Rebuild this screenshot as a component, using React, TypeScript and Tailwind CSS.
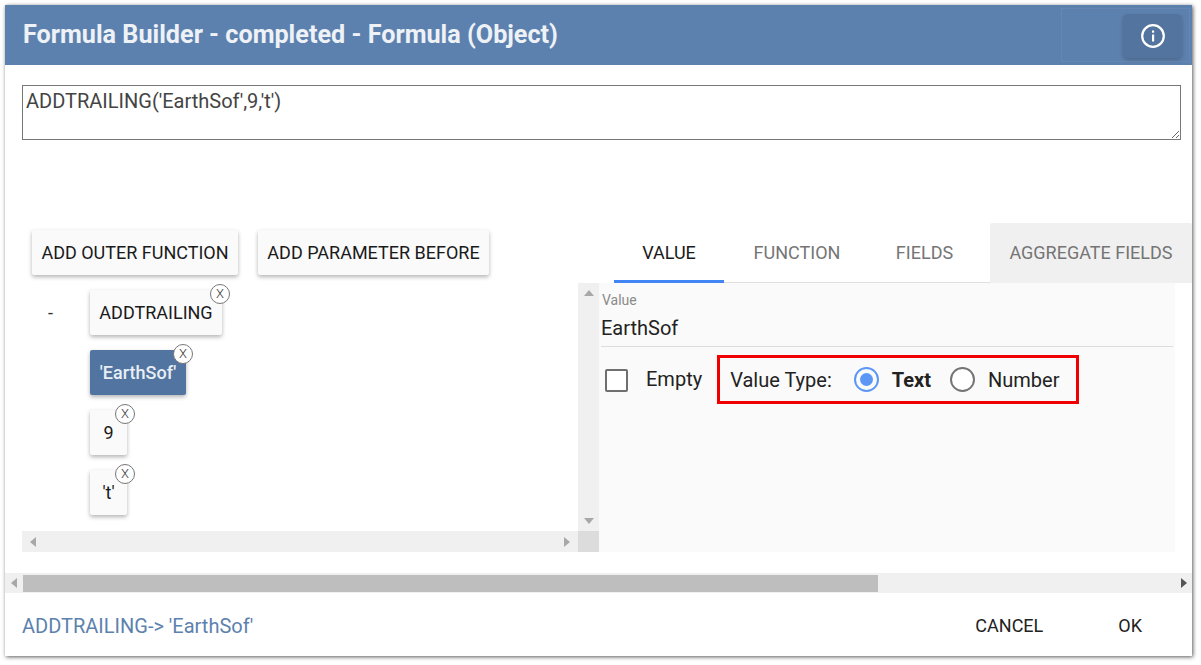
import React from "react";

function Tri({ dir, color = "#a8a8a8" }: { dir: "l" | "r" | "u" | "d"; color?: string }) {
  const p = { l: "6,0 6,10 0,5", r: "0,0 0,10 6,5", u: "0,6 10,6 5,0", d: "0,0 10,0 5,6" }[dir];
  const horiz = dir === "l" || dir === "r";
  return (
    <svg width={horiz ? 6 : 10} height={horiz ? 10 : 6} viewBox={horiz ? "0 0 6 10" : "0 0 10 6"} className="block shrink-0">
      <polygon points={p} fill={color} />
    </svg>
  );
}

function Node({ label, selected, w, close }: { label: string; selected?: boolean; w: string; close: string }) {
  return (
    <div
      className={`relative h-[45px] flex items-center justify-center rounded-[2px] text-[18px] shadow-[0_2px_4px_rgba(0,0,0,0.3)] ${w} ${
        selected ? "bg-[#5274a0] text-[#e8eef5] font-medium" : "bg-[#fafafa] text-[#1a1a1a]"
      }`}
    >
      {label}
      <span
        className={`absolute top-[-6px] ${close} w-[20px] h-[20px] rounded-full border border-[#777777] bg-white flex items-center justify-center text-[13px] font-light text-[#333333]`}
      >
        X
      </span>
    </div>
  );
}

function ToolButton({ label, w }: { label: string; w: string }) {
  return (
    <div className={`h-[45px] ${w} flex items-center justify-center rounded-[2px] bg-[#fafafa] text-[18px] text-[#1a1a1a] shadow-[0_2px_4px_rgba(0,0,0,0.3)]`}>
      {label}
    </div>
  );
}

export default function App() {
  return (
    <div className="w-[1201px] h-[665px] bg-white p-[5px] overflow-hidden font-['Roboto',sans-serif]">
      <div className="w-[1187px] h-[651px] bg-white flex flex-col shadow-[1px_1px_4px_rgba(0,0,0,0.65)]">
        {/* Header */}
        <div className="h-[60px] shrink-0 bg-[#5d81ae] flex items-center justify-between pl-[18px] pr-[2px]">
          <span className="text-[25.2px] font-bold text-[#eef2f7] leading-none">Formula Builder - completed - Formula (Object)</span>
          <div className="w-[129px] h-[54px] border border-[#6587b2] flex items-center justify-end pr-[7px]">
            <div className="w-[59px] h-[44px] mt-[1px] rounded-[5px] bg-[#52749f] shadow-[0_2px_4px_rgba(0,0,0,0.2)] flex items-center justify-center">
              <svg width="24" height="24" viewBox="0 0 24 24" fill="none">
                <circle cx="12" cy="12" r="10.8" stroke="#ffffff" strokeWidth="2.2" />
                <rect x="11" y="10.5" width="2.2" height="7" fill="#ffffff" />
                <rect x="11" y="6.5" width="2.2" height="2.2" fill="#ffffff" />
              </svg>
            </div>
          </div>
        </div>

        {/* Formula */}
        <textarea
          readOnly
          defaultValue="ADDTRAILING('EarthSof',9,'t')"
          className="block shrink-0 mt-[20px] ml-[17px] w-[1159px] h-[55px] border border-[#777777] px-[3px] pt-[3px] pb-[1px] text-[20px] leading-[24px] text-[#444444] outline-none resize-y"
        />

        {/* Workspace */}
        <div className="mt-[83px] h-[329px] shrink-0 flex">
          {/* Left column */}
          <div className="ml-[17px] w-[577px] flex flex-col">
            <div className="h-[60px] shrink-0 flex items-start pt-[7px] pl-[10px] gap-[20px]">
              <ToolButton label="ADD OUTER FUNCTION" w="w-[206px]" />
              <ToolButton label="ADD PARAMETER BEFORE" w="w-[231px]" />
            </div>
            <div className="h-[248px] flex">
              <div className="w-[556px] flex pt-[7px]">
                <div className="w-[68px] h-[45px] pl-[26px] flex items-center text-[18px] text-[#333333]">-</div>
                <div className="flex flex-col items-start gap-[15px]">
                  <Node label="ADDTRAILING" w="w-[132px]" close="right-[-8px]" />
                  <Node label="'EarthSof'" w="w-[96px]" close="right-[-7px]" selected />
                  <Node label="9" w="w-[37px]" close="right-[-8px]" />
                  <Node label="'t'" w="w-[37px]" close="right-[-8px]" />
                </div>
              </div>
              <div className="w-[21px] bg-[#f0f0f0] flex flex-col items-center justify-between py-[7px]">
                <Tri dir="u" />
                <Tri dir="d" />
              </div>
            </div>
            <div className="h-[21px] flex">
              <div className="w-[556px] bg-[#f0f0f0] flex items-center justify-between px-[8px]">
                <Tri dir="l" />
                <Tri dir="r" />
              </div>
              <div className="w-[21px] bg-[#dcdcdc]" />
            </div>
          </div>

          {/* Right column */}
          <div className="w-[593px] flex flex-col">
            <div className="h-[60px] shrink-0 flex text-[18px] text-[#757575]">
              <div className="ml-[15px] w-[110px] border-b-[3px] border-[#4285f4] flex items-center justify-center text-[#1a1a1a] pt-[2px]">VALUE</div>
              <div className="w-[146px] border-b-[1px] border-[#e0e0e0] flex items-center justify-center">FUNCTION</div>
              <div className="w-[120px] border-b-[1px] border-[#e0e0e0] flex items-center justify-center pr-[11px]">FIELDS</div>
              <div className="w-[202px] bg-[#f0f0f0] flex items-center justify-center rounded-t-[2px] pb-[1px]">AGGREGATE FIELDS</div>
            </div>
            <div className="w-[576px] h-[269px] bg-[#fafafa] pl-[2px] pr-[2px]">
              <div className="border-b border-[#dddddd] h-[64px] pt-[9px] flex flex-col">
                <span className="text-[14px] leading-[16px] text-[#8a8a8a] pl-[1px]">Value</span>
                <span className="text-[20px] leading-[24px] text-[#222222] mt-[8px]">EarthSof</span>
              </div>
              <div className="mt-[8px] flex items-start">
                <div className="ml-[4px] mt-[14px] w-[23px] h-[23px] rounded-[2px] border-2 border-[#6f6f6f] bg-white" />
                <span className="ml-[18px] mt-[12px] text-[20px] leading-[24px] text-[#222222]">Empty</span>
                <div className="ml-[15px] w-[362px] h-[49px] border-[3px] border-[#f00000] flex items-center pl-[10px] text-[20px] text-[#222222]">
                  <span>Value Type:</span>
                  <span className="ml-[22px] w-[25px] h-[25px] rounded-full border-2 border-[#5c97f5] flex items-center justify-center">
                    <span className="w-[13px] h-[13px] rounded-full bg-[#5c97f5]" />
                  </span>
                  <span className="ml-[13px] font-bold">Text</span>
                  <span className="ml-[19px] w-[25px] h-[25px] rounded-full border-2 border-[#757575] bg-white" />
                  <span className="ml-[13px]">Number</span>
                </div>
              </div>
            </div>
          </div>
        </div>

        {/* Dialog horizontal scrollbar */}
        <div className="mt-[21px] h-[20px] shrink-0 bg-[#f0f0f0] flex items-center">
          <div className="w-[18px] flex justify-center"><Tri dir="l" /></div>
          <div className="w-[855px] h-[17px] bg-[#bebebe]" />
          <div className="ml-auto pr-[5px]"><Tri dir="r" color="#555555" /></div>
        </div>

        {/* Footer */}
        <div className="flex-1 flex items-center pl-[17px] pt-[2px]">
          <span className="text-[20px] text-[#5d81ae]">ADDTRAILING-&gt; 'EarthSof'</span>
          <span className="ml-auto text-[18px] text-[#222222]">CANCEL</span>
          <span className="ml-[75px] mr-[50px] text-[18px] text-[#222222]">OK</span>
        </div>
      </div>
    </div>
  );
}
